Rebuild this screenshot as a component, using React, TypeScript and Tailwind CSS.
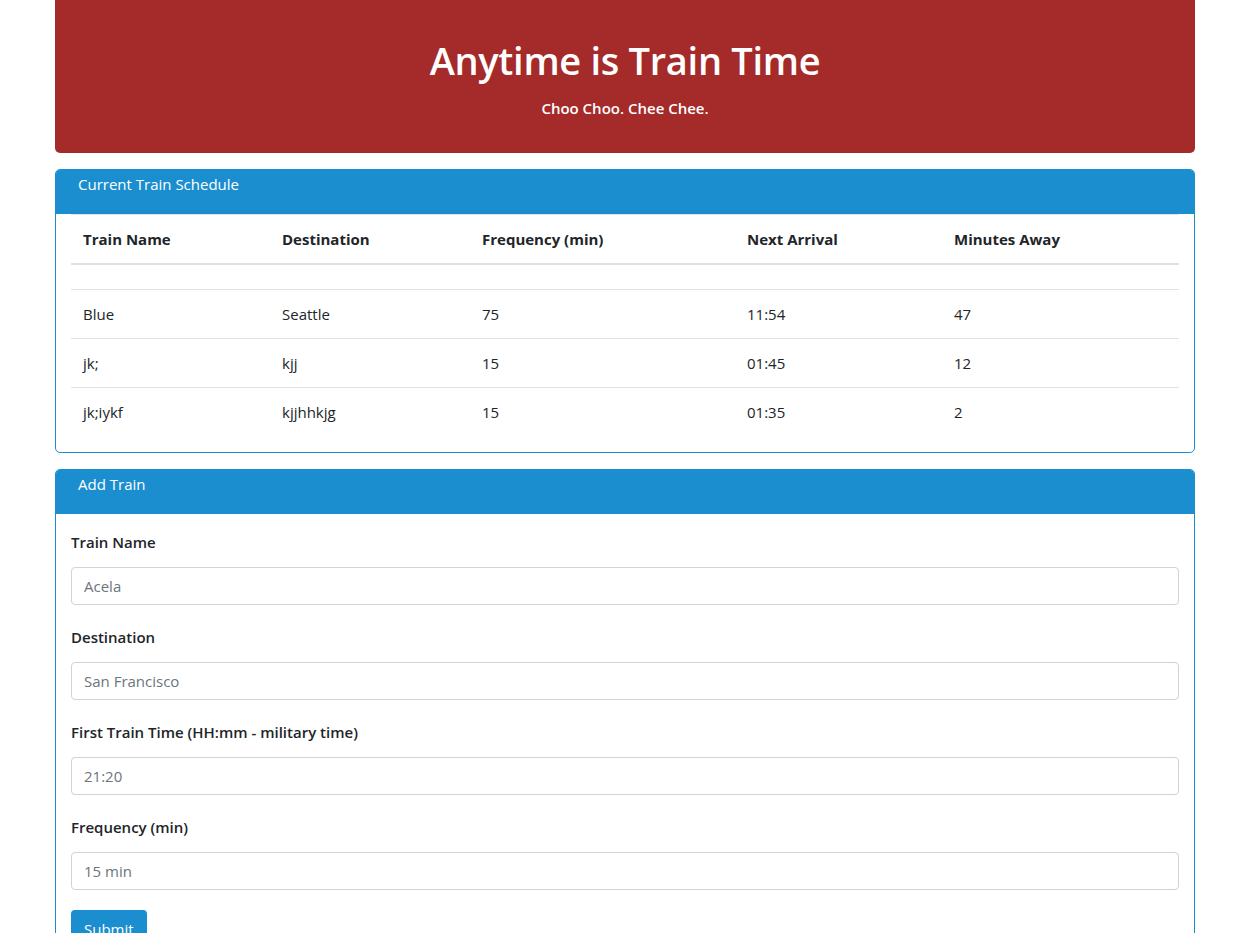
import React from 'react';

const trains = [
  { name: 'Blue', destination: 'Seattle', frequency: '75', next: '11:54', away: '47' },
  { name: 'jk;', destination: 'kjj', frequency: '15', next: '01:45', away: '12' },
  { name: 'jk;iykf', destination: 'kjjhhkjg', frequency: '15', next: '01:35', away: '2' },
];

const fields = [
  { label: 'Train Name', placeholder: 'Acela' },
  { label: 'Destination', placeholder: 'San Francisco' },
  { label: 'First Train Time (HH:mm - military time)', placeholder: '21:20' },
  { label: 'Frequency (min)', placeholder: '15 min' },
];

const App: React.FC = () => {
  return (
    <div className="min-h-screen bg-white text-[#212529] font-['Open_Sans','Noto_Sans',sans-serif] text-[15px]">
      <div className="ml-[55px] w-[1140px] pb-10">
        {/* jumbotron */}
        <div className="h-[153px] rounded-b-[5px] bg-[#a52a2a] text-white text-center pt-[36px]">
          <h1 className="text-[38px] leading-[48px] font-semibold tracking-[-0.3px]">Anytime is Train Time</h1>
          <p className="mt-[12px] text-[15px] leading-[24px] font-semibold">Choo Choo. Chee Chee.</p>
        </div>

        {/* schedule */}
        <div className="mt-[16px] rounded-[5px] border border-[#1a8ecf]">
          <div className="h-[44px] rounded-t-[4px] bg-[#1a8ecf] px-[22px] pt-[4px] text-white text-[15px] leading-[20px]">
            Current Train Schedule
          </div>
          <div className="px-[15px] pb-[16px]">
            <table className="w-full border-collapse text-left">
              <thead>
                <tr className="border-t border-b-2 border-[#dee2e6]">
                  <th className="w-[199px] px-[12px] py-[12px] leading-[24px] font-bold">Train Name</th>
                  <th className="w-[200px] px-[12px] py-[12px] leading-[24px] font-bold">Destination</th>
                  <th className="w-[265px] px-[12px] py-[12px] leading-[24px] font-bold">Frequency (min)</th>
                  <th className="w-[207px] px-[12px] py-[12px] leading-[24px] font-bold">Next Arrival</th>
                  <th className="px-[12px] py-[12px] leading-[24px] font-bold">Minutes Away</th>
                </tr>
              </thead>
              <tbody>
                <tr>
                  <td colSpan={5} className="h-[25px] p-0"></td>
                </tr>
                {trains.map((t) => (
                  <tr key={t.name} className="border-t border-[#dee2e6]">
                    <td className="px-[12px] py-[12px] leading-[24px]">{t.name}</td>
                    <td className="px-[12px] py-[12px] leading-[24px]">{t.destination}</td>
                    <td className="px-[12px] py-[12px] leading-[24px]">{t.frequency}</td>
                    <td className="px-[12px] py-[12px] leading-[24px]">{t.next}</td>
                    <td className="px-[12px] py-[12px] leading-[24px]">{t.away}</td>
                  </tr>
                ))}
              </tbody>
            </table>
          </div>
        </div>

        {/* add train */}
        <div className="mt-[16px] rounded-[5px] border border-[#1a8ecf]">
          <div className="h-[44px] rounded-t-[4px] bg-[#1a8ecf] px-[22px] pt-[4px] text-white text-[15px] leading-[20px]">
            Add Train
          </div>
          <div className="px-[15px] pt-[16px] pb-[20px]">
            {fields.map((f) => (
              <div key={f.label} className="mb-[20px]">
                <label className="block mb-[13px] text-[15px] leading-[24px] font-semibold">{f.label}</label>
                <input
                  type="text"
                  placeholder={f.placeholder}
                  className="block w-full h-[38px] rounded-[4px] border border-[#ced4da] px-[12px] text-[15px] placeholder:text-[#6c757d] outline-none"
                />
              </div>
            ))}
            <button className="h-[38px] rounded-[4px] bg-[#1a8ecf] px-[13px] text-white text-[15px] leading-[24px]">
              Submit
            </button>
          </div>
        </div>
      </div>
    </div>
  );
};

export default App;
